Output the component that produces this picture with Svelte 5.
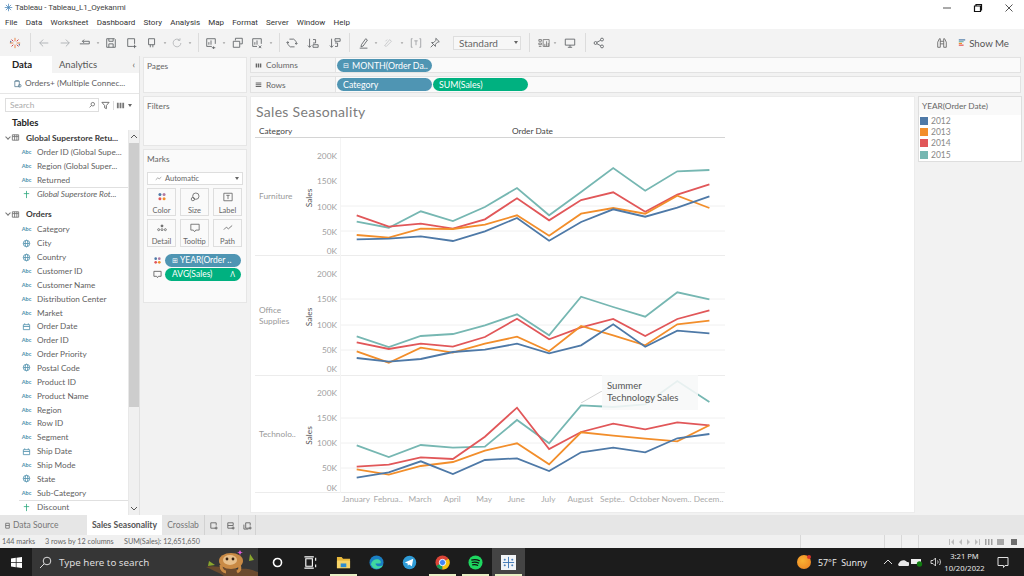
<script>
	const months = ['January', 'Februa..', 'March', 'April', 'May', 'June', 'July', 'August', 'Septe..', 'October', 'Novem..', 'Decem..'];
	const colors = { y2012: '#4e79a7', y2013: '#f28e2b', y2014: '#e15759', y2015: '#76b7b2' };

	const panes = [
		{
			name: ['Furniture'], height: 118, top: 137,
			ticks: [['200K', 155], ['150K', 180], ['100K', 206], ['50K', 231], ['0K', 250]],
			grid: [205, 230],
			series: {
				y2015: [287, 305, 256, 285, 243, 186, 268, 198, 126, 194, 136, 132],
				y2014: [268, 302, 293, 308, 280, 217, 283, 222, 199, 257, 206, 175],
				y2013: [327, 335, 308, 309, 296, 268, 329, 263, 246, 263, 209, 246],
				y2012: [340, 338, 331, 345, 316, 276, 344, 288, 250, 272, 245, 211]
			},
			base: 125
		},
		{
			name: ['Office', 'Supplies'], height: 120, top: 255,
			ticks: [['200K', 273], ['150K', 298], ['100K', 324], ['50K', 349], ['0K', 368]],
			grid: [298, 324, 349],
			series: {
				y2015: [241, 273, 240, 234, 208, 175, 238, 122, 153, 182, 109, 130],
				y2014: [259, 279, 263, 272, 243, 188, 250, 214, 189, 240, 189, 163],
				y2013: [286, 320, 275, 290, 263, 242, 286, 210, 238, 268, 205, 194],
				y2012: [306, 317, 309, 288, 281, 263, 292, 268, 205, 272, 224, 232]
			},
			base: 255
		},
		{
			name: ['Technolo..'], height: 117, top: 375,
			ticks: [['200K', 392], ['150K', 417], ['100K', 442], ['50K', 467], ['0K', 487]],
			grid: [417, 442, 467],
			series: {
				y2015: [208, 243, 207, 215, 212, 132, 202, 88, 93, 85, 15, 78],
				y2014: [272, 266, 244, 249, 182, 95, 219, 168, 143, 160, 139, 148],
				y2013: [280, 296, 270, 258, 224, 202, 265, 169, 179, 188, 196, 148],
				y2012: [305, 289, 256, 294, 252, 247, 285, 229, 215, 229, 187, 174]
			},
			base: 375
		}
	];

	const plotLeft = 299;
	const xAt = (i) => 355.7 + i * 32.06 - plotLeft;
	const linePoints = (pane, vals) =>
		vals.map((v, i) => `${xAt(i).toFixed(1)},${(pane.base + v / 3 - pane.top).toFixed(1)}`).join(' ');

	const returns = [
		['abc', 'Order ID (Global Supe...'],
		['abc', 'Region (Global Super...'],
		['abc', 'Returned']
	];
	const fields = [
		['abc', 'Category'], ['globe', 'City'], ['globe', 'Country'], ['abc', 'Customer ID'],
		['abc', 'Customer Name'], ['abc', 'Distribution Center'], ['abc', 'Market'], ['date', 'Order Date'],
		['abc', 'Order ID'], ['abc', 'Order Priority'], ['globe', 'Postal Code'], ['abc', 'Product ID'],
		['abc', 'Product Name'], ['abc', 'Region'], ['abc', 'Row ID'], ['abc', 'Segment'],
		['date', 'Ship Date'], ['abc', 'Ship Mode'], ['globe', 'State'], ['abc', 'Sub-Category']
	];
	const menu = ['File', 'Data', 'Worksheet', 'Dashboard', 'Story', 'Analysis', 'Map', 'Format', 'Server', 'Window', 'Help'];

	// [icon, left edge of its cell]; each cell runs up to the next one
	const toolStops = [
		['logo', 9], ['sep', 30], ['back', 38], ['fwd', 59], ['loop', 79], ['dd', 92], ['save', 105],
		['newsrc', 126], ['pause', 146], ['dd', 159], ['refresh', 171], ['dd', 184], ['sep', 198],
		['chartadd', 205], ['dd', 218], ['dup', 232], ['clear', 251], ['dd', 265], ['sep', 279],
		['swap', 286], ['asc', 307], ['desc', 329], ['sep', 349],
		['pen', 358], ['dd', 370], ['clip', 382], ['dd', 396], ['tbox', 410], ['pin', 429],
		['combo', 453], ['sep', 529], ['cards', 538], ['dd', 549], ['screen', 564], ['sep', 585], ['share', 593], ['end', 620]
	];
	const tools = toolStops.slice(0, -1).map(([k, x], i) => ({ k, w: toolStops[i + 1][1] - x }));
</script>

{#snippet tool(k)}
	<svg class="ti" viewBox="0 0 14 14" fill="none" stroke="#5d6165" stroke-width="1">
		{#if k === 'logo'}
			<path d="M7 1v4M7 9v4M1 7h4M9 7h4" stroke="#e8762d" />
			<path d="M3 3l2 2M9 9l2 2M3 11l2-2M9 5l2-2" stroke="#c72037" />
			<path d="M2 4.500v2M12 8v2" stroke="#1f457e" />
		{:else if k === 'back'}
			<path d="M12 7H2M6 3L2 7l4 4" stroke="#a9acaf" />
		{:else if k === 'fwd'}
			<path d="M2 7h10M8 3l4 4-4 4" stroke="#a9acaf" />
		{:else if k === 'loop'}
			<path d="M1 8h11V5H4M6 3L4 5l2 2" />
		{:else if k === 'dd'}
			<path d="M5.500 6.500h3l-1.500 1.500z" fill="#777" stroke="none" />
		{:else if k === 'save'}
			<path d="M2 2h9l1 1v9H2zM4.500 2v3h5V2M4.500 12V8h5v4" />
		{:else if k === 'newsrc'}
			<path d="M8 11H2V2h8v6M10 9v4M8 11h4" />
		{:else if k === 'pause'}
			<path d="M3 2h7v7H3zM5 9v3M8 9v3" />
		{:else if k === 'refresh'}
			<path d="M11.500 7a4.500 4.500 0 1 1-1.500-3.400M10.500 1.500v2.500H8" stroke="#b3b5b8" />
		{:else if k === 'chartadd'}
			<path d="M8 11H2V2h10v6M4.500 9V6M7 9V4M10 11v3M8 12.500h4" />
		{:else if k === 'dup'}
			<path d="M4 4V1.500h8V8H9.500M1.500 5h7.500v7H1.500z" />
		{:else if k === 'clear'}
			<path d="M7 11H2V2h10v6M4.500 9V6M7 9V4M9 10l3 3M12 10l-3 3" />
		{:else if k === 'swap'}
			<path d="M4 2.500h5l3 3v3M10 11.500H5l-3-3v-3M10.500 7l1.500 1.500L13.500 7M3.500 7L2 5.500.5 7" />
		{:else if k === 'asc'}
			<path d="M3 2v10M1 10l2 2 2-2M7 12h6v-3H7zM7 7h3V3H7" />
		{:else if k === 'desc'}
			<path d="M3 2v10M1 10l2 2 2-2M7 2h6v3H7zM7 7h3v4H7" />
		{:else if k === 'pen'}
			<path d="M4 9l5-7 2 1.500-5 7-2.500 1zM2 13h9" />
		{:else if k === 'clip'}
			<path d="M4 9l5-6 2 2-6 6-2-1zM4 5l2-2" stroke="#c4c6c8" />
		{:else if k === 'tbox'}
			<path d="M3 2H1.500v10H3M11 2h1.500v10H11M5 4.500h4M7 4.500v5" stroke="#9a9da0" />
		{:else if k === 'pin'}
			<path d="M8 1.500l4 4-2 .5-2.500 2.500V11L3 6.500h2.500L8 4zM5 9l-3 3" />
		{:else if k === 'cards'}
			<path d="M1 3h3v2H1zM1 7h3v2H1zM1 11h3M6 3h7v8H6zM8 11V8M10 11V5M12 11V7" stroke="#777" />
		{:else if k === 'screen'}
			<path d="M1.500 2.500h11v7h-11zM7 9.500V12M4.500 12h5" />
		{:else if k === 'share'}
			<circle cx="3" cy="7" r="1.700" /><circle cx="10.500" cy="3" r="1.700" /><circle cx="10.500" cy="11" r="1.700" />
			<path d="M4.500 6.200L9 3.800M4.500 7.800L9 10.200" />
		{/if}
	</svg>
{/snippet}

{#snippet fieldIcon(type)}
	{#if type === 'abc'}
		<span class="abc">Abc</span>
	{:else if type === 'globe'}
		<svg class="fi" viewBox="0 0 10 10" fill="none" stroke="#4e8fac" stroke-width=".9">
			<circle cx="5" cy="5" r="3.600" /><ellipse cx="5" cy="5" rx="1.500" ry="3.600" /><path d="M1.500 5h7" />
		</svg>
	{:else if type === 'date'}
		<svg class="fi" viewBox="0 0 10 10" fill="none" stroke="#4e8fac" stroke-width=".9">
			<path d="M1.500 3h7v5.500h-7zM3 1.500V3M7 1.500V3M1.500 5h7" />
		</svg>
	{:else}
		<svg class="fi" viewBox="0 0 10 10" fill="none" stroke="#2ea87e" stroke-width=".9">
			<path d="M5 1v8M2 4h6" />
		</svg>
	{/if}
{/snippet}

<div class="app">
	<header class="titlebar">
		<svg class="applogo" viewBox="0 0 12 12" fill="none" stroke="#4a86b8" stroke-width="1">
			<path d="M6 1v10M1 6h10M2.500 2.500l7 7M9.500 2.500l-7 7" />
		</svg>
		<span class="apptitle">Tableau - Tableau_L1_Oyekanmi</span>
		<div class="winbtns">
			<svg viewBox="0 0 10 10" fill="none" stroke="#555"><path d="M1 5h8" /></svg>
			<svg viewBox="0 0 10 10" fill="none" stroke="#111" stroke-width="1.200"><path d="M1.500 3h6v5.500h-6zM3 3V1.500h5.500V7H7.500" /></svg>
			<svg viewBox="0 0 10 10" fill="none" stroke="#555"><path d="M1.500 1.500l7 7M8.500 1.500l-7 7" /></svg>
		</div>
	</header>

	<nav class="menu">
		{#each menu as m}<span>{m}</span>{/each}
	</nav>

	<div class="toolbar">
		{#each tools as t}
			{#if t.k === 'sep'}
				<i class="tsep" style:width="{t.w}px"></i>
			{:else if t.k === 'combo'}
				<div class="combocell" style:width="{t.w}px">
					<div class="combo"><span>Standard</span><b></b></div>
				</div>
			{:else}
				<span class="tcell" style:width="{t.w}px">{@render tool(t.k)}</span>
			{/if}
		{/each}
		<div class="showme">
			<svg class="bino" viewBox="0 0 14 14" fill="none" stroke="#666" stroke-width="1">
				<path d="M2 12V6l2-4h1v10zM9 12V2h1l2 4v6zM5 5h4M5 8h4" />
			</svg>
			<svg class="smicon" viewBox="0 0 10 10">
				<rect x="1" y="1" width="8" height="1.500" fill="#4e79a7" />
				<rect x="1" y="3.200" width="6" height="1.500" fill="#76b7b2" />
				<rect x="1" y="5.400" width="4" height="1.500" fill="#f28e2b" />
				<rect x="1" y="7.600" width="6" height="1.500" fill="#e15759" />
			</svg>
			<span>Show Me</span>
		</div>
	</div>

	<main class="work">
		<aside class="datapane">
			<div class="dtabs">
				<span class="dtab on">Data</span>
				<span class="dtab">Analytics</span>
				<span class="collapse">‹</span>
			</div>
			<div class="source">
				<svg class="fi" viewBox="0 0 10 10" fill="none" stroke="#5c7f95" stroke-width=".9">
					<path d="M2 2.500h5v6H2zM2 2.500c0-1 5-1 5 0" /><circle cx="7.500" cy="7.500" r="1.500" />
				</svg>
				<span>Orders+ (Multiple Connec...</span>
			</div>
			<div class="searchrow">
				<div class="search">
					<span>Search</span>
					<svg viewBox="0 0 10 10" fill="none" stroke="#666"><circle cx="6" cy="4" r="2.200" /><path d="M4.500 5.500L2 8" /></svg>
				</div>
				<svg class="funnel" viewBox="0 0 10 10" fill="none" stroke="#666"><path d="M1 1.500h8L6 5v3.500L4 7.500V5z" /></svg>
				<svg class="funnel grid3" viewBox="0 0 10 10" fill="#777"><path d="M1 2h2v6H1zM4 2h2v6H4zM7 2h2v6H7z" /></svg>
				<b class="dd"></b>
			</div>
			<div class="tablesh">Tables</div>
			<div class="listwrap">
				<div class="list">
					<div class="group">
						<em class="chev"></em>
						<svg class="fi tb" viewBox="0 0 10 10" fill="none" stroke="#777"><path d="M1.500 2h7v6h-7zM1.500 4h7M4 2v6M6.500 2v6" /></svg>
						<span>Global Superstore Retu...</span>
					</div>
					{#each returns as [type, name]}
						<div class="field">{@render fieldIcon(type)}<span>{name}</span></div>
					{/each}
					<div class="field ruled">{@render fieldIcon('hash')}<span class="ital">Global Superstore Rot...</span></div>
					<div class="group orders">
						<em class="chev"></em>
						<svg class="fi tb" viewBox="0 0 10 10" fill="none" stroke="#777"><path d="M1.500 2h7v6h-7zM1.500 4h7M4 2v6M6.500 2v6" /></svg>
						<span>Orders</span>
					</div>
					{#each fields as [type, name]}
						<div class="field">{@render fieldIcon(type)}<span>{name}</span></div>
					{/each}
					<div class="field ruled">{@render fieldIcon('hash')}<span>Discount</span></div>
				</div>
				<div class="scrollbar">
					<svg viewBox="0 0 10 13" fill="none" stroke="#555"><path d="M2 8L5 5l3 3" /></svg>
					<div class="thumb"></div>
					<svg class="down" viewBox="0 0 10 13" fill="none" stroke="#555"><path d="M2 5l3 3 3-3" /></svg>
				</div>
			</div>
		</aside>

		<div class="cards">
			<section class="card pages"><h4>Pages</h4></section>
			<section class="card filters"><h4>Filters</h4></section>
			<section class="card marks">
				<h4>Marks</h4>
				<div class="marktype">
					<svg viewBox="0 0 10 10" fill="none" stroke="#888"><path d="M1 7l3-3 2 1.500L9 3" /></svg>
					<span>Automatic</span>
					<b class="dd"></b>
				</div>
				<div class="markgrid">
					<div class="mbtn">
						<svg viewBox="0 0 12 12">
							<circle cx="3.500" cy="3" r="1.800" fill="#4e79a7" /><circle cx="8.500" cy="3" r="1.800" fill="#b07aa1" />
							<circle cx="3.500" cy="8" r="1.800" fill="#e15759" /><circle cx="8.500" cy="8" r="1.800" fill="#f28e2b" />
						</svg>
						<span>Color</span>
					</div>
					<div class="mbtn">
						<svg viewBox="0 0 12 12" fill="none" stroke="#666"><circle cx="7" cy="5" r="3.800" /><circle cx="3.500" cy="8.500" r="2" /></svg>
						<span>Size</span>
					</div>
					<div class="mbtn">
						<svg viewBox="0 0 12 12" fill="none" stroke="#666"><path d="M1 1.500h10v9H1zM4 4h4M6 4v4.500" /></svg>
						<span>Label</span>
					</div>
					<div class="mbtn">
						<svg viewBox="0 0 12 12" fill="none" stroke="#666"><circle cx="6" cy="3.500" r="1.200" fill="#666" /><circle cx="2" cy="8" r="1.200" /><circle cx="6" cy="8" r="1.200" /><circle cx="10" cy="8" r="1.200" /></svg>
						<span>Detail</span>
					</div>
					<div class="mbtn">
						<svg viewBox="0 0 12 12" fill="none" stroke="#666"><path d="M1 1.500h10v7H7l-1.500 2-1.500-2H1z" /></svg>
						<span>Tooltip</span>
					</div>
					<div class="mbtn">
						<svg viewBox="0 0 12 12" fill="none" stroke="#666"><path d="M1 8l3-3 2.500 2L11 3" /></svg>
						<span>Path</span>
					</div>
				</div>
				<div class="markpill first">
					<svg class="fi" viewBox="0 0 10 10">
						<circle cx="3" cy="3" r="1.500" fill="#4e79a7" /><circle cx="7" cy="3" r="1.500" fill="#b07aa1" />
						<circle cx="3" cy="7" r="1.500" fill="#e15759" /><circle cx="7" cy="7" r="1.500" fill="#f28e2b" />
					</svg>
					<span class="pill blue wide"><i class="plus">⊞</i> YEAR(Order ..</span>
				</div>
				<div class="markpill">
					<svg class="fi" viewBox="0 0 10 10" fill="none" stroke="#666"><path d="M1 1.500h8v5.500H6L5 8.500 4 7H1z" /></svg>
					<span class="pill green wide between">AVG(Sales)<i class="tri">Λ</i></span>
				</div>
			</section>
		</div>

		<div class="center">
			<div class="shelf cols">
				<div class="shelflabel">
					<svg viewBox="0 0 10 10" fill="#666"><path d="M1 2h2v6H1zM4 2h2v6H4zM7 2h2v6H7z" /></svg>
					<span>Columns</span>
				</div>
				<span class="pill blue shelfpill"><i class="plus">⊟</i> MONTH(Order Da..</span>
			</div>
			<div class="shelf rows">
				<div class="shelflabel">
					<svg viewBox="0 0 10 10" fill="#666"><path d="M1 2h8v1.500H1zM1 4.500h8V6H1zM1 7h8v1.500H1z" /></svg>
					<span>Rows</span>
				</div>
				<span class="pill blue shelfpill">Category</span>
				<span class="pill green shelfpill">SUM(Sales)</span>
			</div>

			<div class="lower">
				<section class="view">
					<h2>Sales Seasonality</h2>
					<div class="vizhead">
						<span class="hcat">Category</span>
						<span class="hdate">Order Date</span>
					</div>
					{#each panes as pane}
						<div class="pane" style:height="{pane.height}px">
							<div class="catname">
								{#each pane.name as n}<span>{n}</span>{/each}
							</div>
							<svg class="plot" width="425" height={pane.height} viewBox="0 0 425 {pane.height}">
								{#each pane.grid as g}
									<line x1="41" x2="425" y1={g - pane.top} y2={g - pane.top} stroke="#f0f0f0" />
								{/each}
								<line x1="40.500" x2="40.500" y1="0" y2={pane.height} stroke="#f4f4f4" />
								{#each pane.ticks as [label, y]}
									<text class="tick" x="37" y={y - pane.top + 2.5}>{label}</text>
								{/each}
								<text class="axist" transform="translate(12 {pane.height / 2 + 1}) rotate(-90)">Sales</text>
								{#each Object.keys(colors).reverse() as key}
									<polyline points={linePoints(pane, pane.series[key])} fill="none" stroke={colors[key]} stroke-width="1.800" />
								{/each}
							</svg>
						</div>
					{/each}
					<div class="xaxis">
						{#each months as m}<span>{m}</span>{/each}
					</div>
					<div class="note">Summer<br />Technology Sales</div>
					<svg class="noteline" width="24" height="12" viewBox="0 0 24 12"><path d="M0 12L21 0" stroke="#d4d4d4" fill="none" /></svg>
				</section>

				<aside class="legend">
					<div class="legendh">YEAR(Order Date)</div>
					{#each Object.entries(colors) as [key, c]}
						<div class="legendrow"><i style:background={c}></i><span>{key.slice(1)}</span></div>
					{/each}
				</aside>
			</div>
		</div>
	</main>

	<div class="tabs">
		<span class="tab ds">
			<svg class="fi" viewBox="0 0 10 10" fill="none" stroke="#777"><path d="M3 2.500h4v5.500H3zM3 5h4" /></svg>
			Data Source
		</span>
		<span class="tab sel">Sales Seasonality</span>
		<span class="tab cross">Crosslab</span>
		{#each ['M8 8H2V2h6v3', 'M8 8H2V2h6v3M2 5h6', 'M8 8H3V2h5v3M1 4v5h5'] as d}
			<span class="tab addtab">
				<svg viewBox="0 0 10 10" fill="none" stroke="#666"><path {d} /><path d="M8 6v3.500M6.300 7.800h3.400" /></svg>
			</span>
		{/each}
	</div>

	<div class="status">
		<span class="s1">144 marks</span>
		<span class="s2">3 rows by 12 columns</span>
		<span class="s3">SUM(Sales): 12,651,650</span>
		<div class="statusr">
			<i class="d d1"></i><i class="d d2"></i><i class="d d3"></i><i class="d d4"></i>
			<svg class="nav" width="32" height="8" viewBox="0 0 32 8" fill="#bdbdbd">
				<path d="M1 1h1v6H1zM6 1v6L3 4zM14 1v6l-3-3zM19 1v6l3-3zM27 1v6l3-3zM31 1h1v6h-1z" />
			</svg>
			<svg class="views" width="36" height="8" viewBox="0 0 36 8">
				<path d="M1 1h1.500v6H1zM4 1h1.500v6H4zM7 1h1.500v6H7z" fill="#a0a0a0" />
				<rect x="13" y="1" width="7" height="6" fill="#a8a8a8" />
				<rect x="27" y="1" width="6" height="6" fill="#6e6e6e" />
			</svg>
		</div>
	</div>

	<footer class="taskbar">
		<div class="start">
			<svg width="11" height="11" viewBox="0 0 11 11" fill="#fff"><path d="M0 1.500l4.800-.7v4.300H0zM5.500.7L11 0v5.100H5.500zM0 5.800h4.800v4.400L0 9.500zM5.500 5.800H11V11l-5.500-.8z" /></svg>
		</div>
		<div class="tsearch">
			<svg width="13" height="13" viewBox="0 0 13 13" fill="none" stroke="#ddd"><circle cx="8" cy="5" r="3.800" /><path d="M5.200 7.800L1 12" /></svg>
			<span>Type here to search</span>
			<svg class="sloth" width="52" height="28" viewBox="0 0 52 28">
				<path d="M0 19c10-3 24 3 34 2s14 2 18 3v4H18C12 24 6 22 0 19z" fill="#6b4a2e" />
				<path d="M3 13l6 4-7 1zM44 6l4 6-5 1z" fill="#8aa62d" />
				<ellipse cx="25" cy="13" rx="12" ry="8" fill="#c98a45" />
				<ellipse cx="24" cy="12" rx="7" ry="5" fill="#e8c08c" />
				<circle cx="21" cy="11" r="1.400" fill="#3a2414" /><circle cx="27" cy="11" r="1.400" fill="#3a2414" />
				<path d="M34 2l1 2 2 .5-2 .5-1 2-1-2-2-.5 2-.5z" fill="#e35be0" />
				<path d="M15 17c0 5 3 7 5 7M33 17c2 4 0 6-2 7" stroke="#c98a45" stroke-width="3" fill="none" />
			</svg>
		</div>
		<div class="tapps">
			<span class="tapp"><svg viewBox="0 0 16 16" fill="none" stroke="#fff" stroke-width="1.700"><circle cx="8" cy="8" r="4.300" /></svg></span>
			<span class="tapp"><svg viewBox="0 0 16 16" fill="none" stroke="#fff" stroke-width="1.200"><path d="M3 4h7v8H3zM1.500 2h10M1.500 14h10M13.500 3v3M13.500 10v3" /></svg></span>
			<span class="tapp run"><svg viewBox="0 0 16 16"><path d="M1 2h5l1.500 2H15v10H1z" fill="#e9b93c" /><path d="M1 6h14v8H1z" fill="#f8d568" /><path d="M5 9h6v4H5z" fill="#2f8ed0" /></svg></span>
			<span class="tapp"><svg viewBox="0 0 16 16"><circle cx="8" cy="8" r="7.500" fill="#1b7fc4" /><path d="M2 10c1-5 7-7 10-4 1 1 1 3-1 3H7c0 3 4 4 8 2-2 4-8 5-11 2" fill="#40d8a0" /></svg></span>
			<span class="tapp"><svg viewBox="0 0 16 16"><circle cx="8" cy="8" r="7.200" fill="#2f9bd6" /><path d="M3 8l9-4-1.500 8-3-2-1.300 1.500L6 9z" fill="#fff" /></svg></span>
			<span class="tapp run"><svg viewBox="0 0 16 16"><circle cx="8" cy="8" r="7.500" fill="#db4437" /><path d="M8 8L1.500 11.500A7.500 7.500 0 0 0 8 15.500z" fill="#0f9d58" /><path d="M8 8v7.500A7.500 7.500 0 0 0 14.500 4z" fill="#f4c20d" /><circle cx="8" cy="8" r="3.400" fill="#4285f4" stroke="#fff" /></svg></span>
			<span class="tapp run"><svg viewBox="0 0 16 16"><circle cx="8" cy="8" r="7.500" fill="#1ed760" /><path d="M3.500 5.500c3-1 6-.8 9 .8M4 8c2.500-.7 5.500-.5 7.800.8M4.500 10.500c2-.5 4.500-.3 6.300.7" stroke="#111" stroke-width="1.300" fill="none" /></svg></span>
			<span class="tapp run active"><svg viewBox="0 0 16 16" fill="none" stroke="#3f78b5" stroke-width="1"><rect x="0" y="0" width="16" height="16" fill="#f2f5f8" stroke="none" /><path d="M8 2v12M2 8h12M4 4v2M3 5h2M12 4v2M11 5h2M4 10v2M3 11h2M12 10v2M11 11h2" /></svg></span>
		</div>
		<div class="tray">
			<span class="sun"><i></i></span>
			<span class="weather">57°F&nbsp;&nbsp;Sunny</span>
			<svg class="chev2" width="10" height="6" viewBox="0 0 10 6" fill="none" stroke="#ddd"><path d="M1 5l4-4 4 4" /></svg>
			<svg class="cloud" width="11" height="7" viewBox="0 0 11 7" fill="#e8e8e8"><path d="M1 7a2 2 0 0 1 0-3c1-3 6-4 8-1a2 2 0 0 1 1 4z" /></svg>
			<svg class="batt" width="12" height="10" viewBox="0 0 12 10"><rect x="0" y="2" width="10" height="5" fill="#eee" /><circle cx="8.500" cy="7" r="2.700" fill="#107c10" /></svg>
			<svg class="spk" width="12" height="10" viewBox="0 0 12 10" fill="none" stroke="#ddd" stroke-width=".9"><path d="M1 3.500h2L5.500 1v8L3 6.500H1zM7.500 3.500c.7 1 .7 2 0 3M9.500 2c1.200 2 1.200 4 0 6" /></svg>
			<div class="clock"><span>3:21 PM</span><span>10/20/2022</span></div>
			<svg class="notif" width="12" height="12" viewBox="0 0 12 12" fill="none" stroke="#e0e0e0"><path d="M1 1.500h10v8H8l-1.500 2v-2H1z" /></svg>
		</div>
	</footer>
</div>

<style>
	:global(body) {
		margin: 0;
		background: #fff;
		overflow: hidden;
	}
	.app {
		width: 1024px;
		height: 576px;
		display: flex;
		flex-direction: column;
		overflow: hidden;
		font-family: Lato, 'Open Sans', sans-serif;
		font-size: 8.500px;
		color: #555;
		background: #f2f2f2;
	}

	.titlebar {
		height: 15px;
		flex: none;
		display: flex;
		align-items: center;
		background: #fff;
		padding-left: 4px;
		color: #444;
	}
	.applogo {
		width: 9px;
		height: 9px;
		margin-right: 2px;
	}
	.apptitle {
		font-size: 8px;
		font-family: Roboto, sans-serif;
		letter-spacing: -0.1px;
	}
	.winbtns {
		margin-left: auto;
		margin-right: 10px;
		display: flex;
		gap: 21px;
		margin-top: 1px;
	}
	.winbtns svg {
		width: 10px;
		height: 10px;
	}

	.menu {
		height: 14px;
		flex: none;
		display: flex;
		align-items: center;
		gap: 8.200px;
		padding-left: 5px;
		background: #fff;
		font: 8px Roboto, sans-serif;
		color: #333;
	}

	.toolbar {
		height: 27px;
		flex: none;
		display: flex;
		align-items: center;
		padding-left: 9px;
		background: #f3f3f3;
	}
	.tcell {
		display: flex;
		flex: none;
	}
	.ti {
		width: 12px;
		height: 12px;
		flex: none;
	}
	.tsep {
		display: block;
		height: 19px;
		flex: none;
		border-left: 1px solid #dcdcdc;
		box-sizing: border-box;
	}
	.combocell {
		flex: none;
	}
	.combo {
		width: 68px;
		height: 14px;
		box-sizing: border-box;
		border: 1px solid #dedede;
		background: #f7f7f7;
		display: flex;
		align-items: center;
		padding-left: 5px;
		font-size: 10px;
		color: #666;
	}
	.combo b {
		margin-left: auto;
		margin-right: 2px;
		width: 0;
		border: 2px solid transparent;
		border-top: 3px solid #666;
		border-bottom: none;
	}
	.showme {
		margin-left: auto;
		margin-right: 15px;
		display: flex;
		align-items: center;
		font-size: 9.700px;
		color: #555;
	}
	.bino {
		width: 12px;
		height: 12px;
		margin-right: 10px;
	}
	.smicon {
		width: 8px;
		height: 9px;
		margin-right: 3px;
	}

	.work {
		height: 459px;
		flex: none;
		display: flex;
	}
	.datapane {
		width: 139px;
		flex: none;
		background: #fff;
		display: flex;
		flex-direction: column;
		border-right: 1px solid #e0e0e0;
		box-sizing: content-box;
	}
	.dtabs {
		height: 17px;
		display: flex;
		align-items: center;
		background: #f3f3f3;
		position: relative;
	}
	.dtab {
		width: 52px;
		height: 100%;
		display: flex;
		align-items: center;
		justify-content: center;
		font-size: 9.500px;
		color: #555;
	}
	.dtab.on {
		background: #fff;
		font-weight: 700;
		color: #222;
		font-size: 9.500px;
		padding-right: 8px;
		box-sizing: border-box;
	}
	.collapse {
		margin-left: auto;
		margin-right: 4px;
		font-size: 9px;
	}
	.source {
		height: 20px;
		display: flex;
		align-items: center;
		gap: 3px;
		padding-left: 13px;
		border-bottom: 1px solid #e6e6e6;
		font-size: 8.300px;
		color: #5f5f5f;
	}
	.fi {
		width: 9px;
		height: 9px;
		flex: none;
	}
	.searchrow {
		display: flex;
		align-items: center;
		height: 14px;
		margin-top: 4px;
		padding-left: 5px;
		flex: none;
	}
	.search {
		width: 94px;
		height: 14px;
		box-sizing: border-box;
		border: 1px solid #dedede;
		display: flex;
		align-items: center;
		justify-content: space-between;
		padding: 0 2px 0 4px;
		color: #aaa;
		font-size: 8.300px;
	}
	.search svg {
		width: 8px;
		height: 8px;
	}
	.funnel {
		width: 9px;
		height: 9px;
		margin-left: 2px;
		flex: none;
	}
	.grid3 {
		margin-left: 3px;
		padding-left: 2px;
		border-left: 1px solid #ddd;
	}
	.dd {
		width: 0;
		margin-left: 3px;
		border: 2px solid transparent;
		border-top: 3px solid #666;
		border-bottom: none;
	}
	.tablesh {
		font-weight: 700;
		font-size: 9.500px;
		color: #222;
		margin: 3px 0 0 12px;
		height: 15px;
		display: flex;
		align-items: center;
		flex: none;
	}
	.listwrap {
		flex: 1;
		display: flex;
		min-height: 0;
	}
	.list {
		flex: 1;
		min-width: 0;
		overflow: hidden;
	}
	.group {
		height: 15px;
		display: flex;
		align-items: center;
		font-weight: 700;
		color: #3a3a3a;
		font-size: 8.400px;
		white-space: nowrap;
	}
	.orders {
		margin-top: 6px;
		height: 16px;
	}
	.chev {
		display: block;
		width: 3px;
		height: 3px;
		margin: 0 1px 2px 6px;
		border-right: 1px solid #777;
		border-bottom: 1px solid #777;
		transform: rotate(45deg);
		flex: none;
	}
	.tb {
		margin-right: 6px;
	}
	.field {
		height: 13.860px;
		display: flex;
		align-items: center;
		white-space: nowrap;
		margin-left: 19px;
		color: #5f5f5f;
		font-size: 8.200px;
	}
	.field > :global(.fi),
	.field > .abc {
		width: 11px;
		margin: 0 5px 0 2px;
		flex: none;
	}
	.abc {
		font-size: 5.500px;
		font-weight: 700;
		color: #4e8fac;
		text-align: center;
	}
	.ruled {
		border-top: 1px solid #e0e0e0;
		box-sizing: border-box;
	}
	.ital {
		font-style: italic;
	}
	.scrollbar {
		width: 10px;
		flex: none;
		background: #f0f0f0;
		position: relative;
		display: flex;
		flex-direction: column;
		border-left: 1px solid #e8e8e8;
	}
	.scrollbar svg {
		width: 10px;
		height: 13px;
		flex: none;
	}
	.thumb {
		height: 264px;
		background: #cdcdcd;
	}
	.down {
		margin-top: auto;
	}

	.cards {
		width: 104px;
		flex: none;
		margin: 0 3px 0 3px;
		display: flex;
		flex-direction: column;
		gap: 3px;
		padding-top: 1px;
	}
	.card {
		border: 1px solid #e6e6e6;
		background: #fafafa;
		box-sizing: border-box;
	}
	.card h4 {
		margin: 0;
		padding: 3px 3px 0;
		font-size: 8.300px;
		font-weight: 400;
		color: #666;
	}
	.pages {
		height: 36px;
	}
	.filters {
		height: 50px;
	}
	.filters h4 {
		padding-top: 4px;
	}
	.marks {
		height: 154px;
		padding: 0 3px;
	}
	.marks h4 {
		padding: 4px 0 0;
		height: 18px;
		box-sizing: border-box;
	}
	.marktype {
		height: 13px;
		margin-top: 4px;
		box-sizing: border-box;
		border: 1px solid #dedede;
		display: flex;
		align-items: center;
		padding-left: 7px;
		gap: 3px;
		font-size: 7.500px;
		color: #666;
		background: #fff;
	}
	.marktype svg {
		width: 7px;
		height: 7px;
	}
	.marktype .dd {
		margin-left: auto;
		margin-right: 3px;
	}
	.markgrid {
		display: grid;
		grid-template-columns: 29px 29px 29px;
		grid-auto-rows: 28px;
		column-gap: 4px;
		row-gap: 3px;
		margin-top: 3px;
	}
	.mbtn {
		border: 1px solid #dedede;
		box-sizing: border-box;
		display: flex;
		flex-direction: column;
		align-items: center;
		justify-content: flex-end;
		gap: 4px;
		font-size: 7.500px;
		line-height: 9px;
		color: #666;
	}
	.mbtn svg {
		width: 10px;
		height: 10px;
	}
	.markpill {
		display: flex;
		align-items: center;
		height: 14px;
		gap: 3px;
		padding-left: 6px;
	}
	.first {
		margin-top: 6px;
	}
	.pill {
		color: #fff;
		border-radius: 8px;
		display: flex;
		align-items: center;
		box-sizing: border-box;
		white-space: nowrap;
		font-size: 8.500px;
		flex: none;
	}
	.blue {
		background: #4f95b3;
	}
	.green {
		background: #00b180;
	}
	.wide {
		width: 76px;
		height: 13px;
		padding-left: 7px;
		gap: 2px;
	}
	.between {
		justify-content: space-between;
		padding-right: 6px;
	}
	.plus,
	.tri {
		font-style: normal;
		font-size: 7px;
	}

	.center {
		flex: 1;
		min-width: 0;
		display: flex;
		flex-direction: column;
		margin-right: 3px;
	}
	.shelf {
		background: #fafafa;
		border: 1px solid #e2e2e2;
		box-sizing: border-box;
		display: flex;
		align-items: center;
		flex: none;
		gap: 1px;
	}
	.cols {
		height: 16px;
		margin-top: 1px;
	}
	.rows {
		height: 17px;
		margin-top: 3px;
	}
	.shelflabel {
		width: 85px;
		height: 100%;
		flex: none;
		box-sizing: border-box;
		border-right: 1px solid #e2e2e2;
		background: #f5f5f5;
		display: flex;
		align-items: center;
		gap: 4px;
		padding-left: 4px;
		color: #666;
		font-size: 8.300px;
	}
	.shelflabel svg {
		width: 7px;
		height: 7px;
	}
	.shelfpill {
		width: 95px;
		height: 13px;
		padding-left: 6px;
		gap: 3px;
		font-size: 8.800px;
	}

	.lower {
		flex: 1;
		display: flex;
		gap: 3px;
		margin-top: 3px;
		min-height: 0;
	}
	.view {
		width: 665px;
		height: 417px;
		flex: none;
		background: #fff;
		border: 1px solid #ececec;
		box-sizing: border-box;
		position: relative;
		padding-left: 4px;
	}
	.view h2 {
		margin: 0;
		padding: 6px 0 0 1px;
		height: 27px;
		box-sizing: border-box;
		font-size: 14px;
		font-weight: 400;
		color: #7c7c7c;
		letter-spacing: 0.3px;
		white-space: nowrap;
	}
	.vizhead {
		width: 470px;
		height: 13px;
		display: flex;
		align-items: center;
		border-bottom: 1px solid #d4d4d4;
		font-size: 8.300px;
		color: #444;
	}
	.hcat {
		width: 85px;
		padding-left: 4px;
		box-sizing: border-box;
	}
	.hdate {
		width: 385px;
		text-align: center;
	}
	.pane {
		width: 470px;
		display: flex;
		border-bottom: 1px solid #ececec;
		box-sizing: border-box;
	}
	.pane:last-of-type {
		border-bottom-color: #cfcfcf;
	}
	.catname {
		width: 45px;
		flex: none;
		display: flex;
		flex-direction: column;
		justify-content: center;
		gap: 2px;
		padding-left: 4px;
		box-sizing: border-box;
		color: #999;
		font-size: 8.300px;
		line-height: 9px;
	}
	.plot {
		flex: none;
		overflow: visible;
	}
	.tick {
		font-size: 8.300px;
		fill: #a0a0a0;
		text-anchor: end;
	}
	.axist {
		font-size: 8.300px;
		fill: #555;
		text-anchor: middle;
	}
	.xaxis {
		margin-left: 85px;
		width: 385px;
		height: 12px;
		display: grid;
		grid-template-columns: repeat(12, 32.060px);
		align-items: center;
		justify-items: center;
		color: #aaa;
		font-size: 8.300px;
		white-space: nowrap;
	}
	.note {
		position: absolute;
		left: 351px;
		top: 278px;
		width: 96px;
		height: 35px;
		box-sizing: border-box;
		padding: 5px 0 0 5px;
		background: rgba(247, 248, 248, 0.88);
		color: #555;
		font-size: 9.600px;
		line-height: 12px;
	}
	.noteline {
		position: absolute;
		left: 330px;
		top: 294px;
	}
	.legend {
		width: 104px;
		height: 66px;
		flex: none;
		box-sizing: border-box;
		border: 1px solid #dedede;
		background: #fff;
	}
	.legendh {
		height: 18px;
		display: flex;
		align-items: center;
		padding-left: 3px;
		background: #f9f9f9;
		font-size: 8.300px;
		color: #666;
	}
	.legendrow {
		height: 11.300px;
		display: flex;
		align-items: center;
		gap: 3px;
		padding-left: 1px;
		font-size: 8.500px;
		color: #888;
	}
	.legendrow i {
		display: block;
		width: 8px;
		height: 8px;
	}

	.tabs {
		height: 20px;
		flex: none;
		display: flex;
		background: #e6e6e6;
		font-size: 8.500px;
		color: #777;
	}
	.tab {
		display: flex;
		align-items: center;
		justify-content: center;
		box-sizing: border-box;
		white-space: nowrap;
		flex: none;
	}
	.ds {
		width: 87px;
		justify-content: flex-start;
		padding-left: 3px;
		gap: 1px;
	}
	.sel {
		width: 75px;
		background: #fff;
		font-weight: 700;
		color: #555;
		font-size: 8.600px;
	}
	.cross {
		width: 43px;
		border-right: 1px solid #d2d2d2;
	}
	.addtab {
		width: 17px;
		border-right: 1px solid #d2d2d2;
	}
	.addtab svg {
		width: 9px;
		height: 9px;
	}

	.status {
		height: 13px;
		flex: none;
		display: flex;
		align-items: center;
		background: #f0f0f0;
		font-size: 7.200px;
		color: #666;
		position: relative;
	}
	.s1 {
		margin-left: 2px;
		width: 43px;
	}
	.s2 {
		width: 79px;
	}
	.statusr {
		margin-left: auto;
		display: flex;
		align-items: center;
		gap: 4px;
		margin-right: 4px;
	}
	.d {
		position: absolute;
		top: 0;
		bottom: 0;
		width: 1px;
		background: #d8d8d8;
	}
	.d1 {
		left: 800px;
	}
	.d2 {
		left: 884px;
	}
	.d3 {
		left: 901px;
	}
	.d4 {
		left: 918px;
	}

	.taskbar {
		height: 28px;
		flex: 1;
		display: flex;
		align-items: center;
		background: #1c1c1c;
		color: #e8e8e8;
	}
	.start {
		width: 32px;
		display: flex;
		justify-content: center;
		flex: none;
	}
	.tsearch {
		width: 226px;
		height: 100%;
		flex: none;
		box-sizing: border-box;
		display: flex;
		align-items: center;
		background: #363636;
		padding-left: 7px;
		gap: 7px;
		font: 9.800px 'Noto Sans', sans-serif;
		color: #ddd;
		position: relative;
	}
	.sloth {
		position: absolute;
		right: 0;
		top: 0;
	}
	.tapps {
		display: flex;
		height: 100%;
		margin-left: 3px;
		flex: none;
	}
	.tapp {
		display: flex;
		width: 33px;
		height: 100%;
		align-items: center;
		justify-content: center;
		flex: none;
		position: relative;
	}
	.tapp svg {
		width: 15px;
		height: 15px;
	}
	.run::after {
		content: '';
		position: absolute;
		left: 3px;
		right: 3px;
		bottom: 0;
		height: 2px;
		background: #e6efc4;
	}
	.active {
		background: #444;
	}
	.tray {
		margin-left: auto;
		display: flex;
		align-items: center;
		height: 100%;
		padding-right: 15px;
		gap: 5px;
		font-family: 'Noto Sans', sans-serif;
	}
	.sun {
		width: 14px;
		height: 14px;
		border-radius: 50%;
		background: radial-gradient(circle at 40% 40%, #f9b233, #ec7c1f);
		position: relative;
	}
	.sun i {
		position: absolute;
		right: 0;
		top: 0;
		width: 4px;
		height: 4px;
		border-radius: 50%;
		background: #d8342a;
	}
	.weather {
		font-size: 8.900px;
		margin: 0 11px 0 2px;
		white-space: nowrap;
	}
	.batt {
		margin-left: -3.500px;
	}
	.spk {
		margin-left: 2px;
	}
	.clock {
		display: flex;
		flex-direction: column;
		align-items: center;
		font-size: 7.600px;
		line-height: 12px;
		margin: 0 7px 0 -2.500px;
		width: 41px;
	}
</style>
